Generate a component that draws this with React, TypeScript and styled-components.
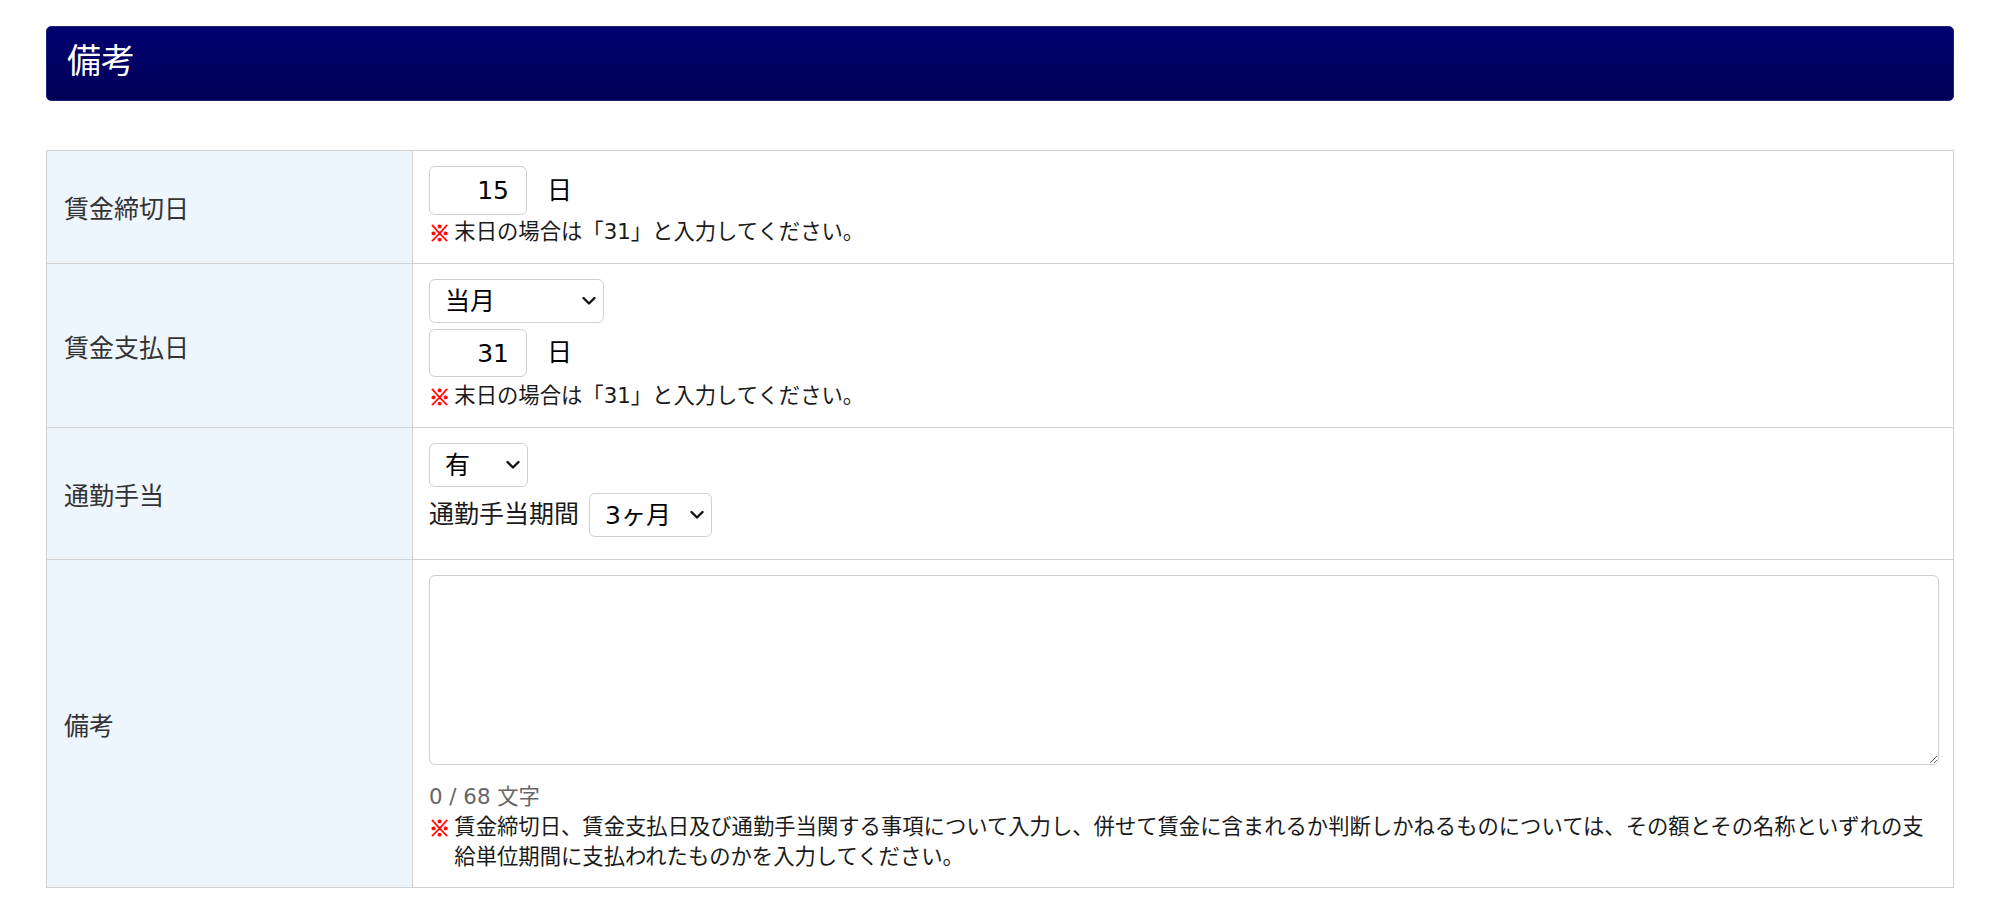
import React from "react";
import styled, { createGlobalStyle } from "styled-components";

const GlobalStyle = createGlobalStyle`
  body {
    margin: 0;
    background: #fff;
    font-family: "DejaVu Sans", "Noto Sans CJK JP", sans-serif;
    color: #1a1a1a;
  }
`;

const Page = styled.div`
  padding: 26px 46px 24px;
`;

const SectionTitle = styled.h2`
  margin: 0 0 49px;
  height: 75px;
  box-sizing: border-box;
  display: flex;
  align-items: center;
  padding: 0 20px 5px;
  background: linear-gradient(#00006f, #000057);
  border: 1px solid #22227a;
  border-radius: 5px;
  color: #fff;
  font-size: 34px;
  font-weight: 400;
  line-height: 1;
`;

const FormTable = styled.div`
  border: 1px solid #d2d2d2;
`;

const Row = styled.div`
  display: grid;
  grid-template-columns: 366px 1fr;

  &:not(:last-child) {
    border-bottom: 1px solid #d2d2d2;
  }
`;

const Label = styled.div`
  box-sizing: border-box;
  display: flex;
  align-items: center;
  padding: 0 17px;
  background: #edf5fd;
  border-right: 1px solid #d2d2d2;
  font-size: 25px;
  color: #333;
`;

const Value = styled.div<{ $padBottom?: number }>`
  display: flex;
  flex-direction: column;
  align-items: flex-start;
  padding: 15px 14px ${(p) => p.$padBottom ?? 16}px 16px;
  font-size: 25px;
  min-width: 0;
`;

const Line = styled.div<{ $gap?: number }>`
  display: flex;
  align-items: center;
  margin-top: ${(p) => p.$gap ?? 0}px;
  line-height: 1.2;
`;

const NumberInput = styled.input<{ $height?: number }>`
  box-sizing: border-box;
  width: 98px;
  height: ${(p) => p.$height ?? 49}px;
  padding: 0 17px 0 8px;
  border: 1px solid #cfcfcf;
  border-radius: 6px;
  font-family: inherit;
  font-size: 25px;
  color: #000;
  text-align: right;
  outline: none;
`;

const Unit = styled.span`
  margin-left: 20px;
  color: #000;
`;

const SelectWrap = styled.span<{ $width: number; $offset?: number }>`
  position: relative;
  display: inline-flex;
  width: ${(p) => p.$width}px;
  margin-left: ${(p) => p.$offset ?? 0}px;
`;

const Select = styled.select`
  appearance: none;
  box-sizing: border-box;
  width: 100%;
  height: 44px;
  padding: 0 30px 0 15px;
  border: 1px solid #cfcfcf;
  border-radius: 6px;
  background: #fff;
  font-family: inherit;
  font-size: 25px;
  color: #000;
  outline: none;
`;

const Chevron = styled.svg`
  position: absolute;
  right: 8px;
  top: 50%;
  transform: translateY(-50%);
  pointer-events: none;
`;

const Note = styled.div<{ $gap?: number }>`
  display: flex;
  margin-top: ${(p) => p.$gap ?? 2}px;
  font-size: 21.33px;
  line-height: 30px;
  color: #1a1a1a;
`;

const Mark = styled.span`
  flex: none;
  margin-right: 4px;
  font-family: "Noto Sans CJK JP", sans-serif;
  color: #f00;
  font-weight: 700;
  -webkit-text-stroke: 0.7px #f00;
`;

const Memo = styled.textarea`
  box-sizing: border-box;
  align-self: stretch;
  width: 100%;
  height: 190px;
  border: 1px solid #cfcfcf;
  border-radius: 6px;
  font-family: inherit;
  font-size: 21px;
  outline: none;
`;

const Counter = styled.div`
  margin-top: 17px;
  font-size: 21.33px;
  line-height: 30px;
  color: #666;
`;

function Dropdown({
  width,
  value,
  options,
  offset,
}: {
  width: number;
  value: string;
  options: string[];
  offset?: number;
}) {
  return (
    <SelectWrap $width={width} $offset={offset}>
      <Select defaultValue={value}>
        {options.map((o) => (
          <option key={o}>{o}</option>
        ))}
      </Select>
      <Chevron width="14" height="9" viewBox="0 0 14 9">
        <polyline
          points="1.5,1.5 7,7 12.5,1.5"
          fill="none"
          stroke="#111"
          strokeWidth="2.4"
          strokeLinecap="round"
          strokeLinejoin="round"
        />
      </Chevron>
    </SelectWrap>
  );
}

function Hint({ children, gap }: { children: React.ReactNode; gap?: number }) {
  return (
    <Note $gap={gap}>
      <Mark>※</Mark>
      <span>{children}</span>
    </Note>
  );
}

export default function App() {
  return (
    <>
      <GlobalStyle />
      <Page>
        <SectionTitle>備考</SectionTitle>
        <FormTable>
          <Row>
            <Label>賃金締切日</Label>
            <Value>
              <Line>
                <NumberInput defaultValue="15" />
                <Unit>日</Unit>
              </Line>
              <Hint>末日の場合は「31」と入力してください。</Hint>
            </Value>
          </Row>
          <Row>
            <Label>賃金支払日</Label>
            <Value>
              <Line>
                <Dropdown width={175} value="当月" options={["当月", "翌月", "翌々月"]} />
              </Line>
              <Line $gap={6}>
                <NumberInput defaultValue="31" $height={48} />
                <Unit>日</Unit>
              </Line>
              <Hint gap={4}>末日の場合は「31」と入力してください。</Hint>
            </Value>
          </Row>
          <Row>
            <Label>通勤手当</Label>
            <Value $padBottom={22}>
              <Line>
                <Dropdown width={99} value="有" options={["有", "無"]} />
              </Line>
              <Line $gap={6}>
                <span>通勤手当期間</span>
                <Dropdown width={123} offset={10} value="3ヶ月" options={["1ヶ月", "3ヶ月", "6ヶ月"]} />
              </Line>
            </Value>
          </Row>
          <Row>
            <Label>備考</Label>
            <Value $padBottom={15}>
              <Memo />
              <Counter>0 / 68 文字</Counter>
              <Hint gap={0}>
                賃金締切日、賃金支払日及び通勤手当関する事項について入力し、併せて賃金に含まれるか判断しかねるものについては、その額とその名称といずれの支給単位期間に支払われたものかを入力してください。
              </Hint>
            </Value>
          </Row>
        </FormTable>
      </Page>
    </>
  );
}
